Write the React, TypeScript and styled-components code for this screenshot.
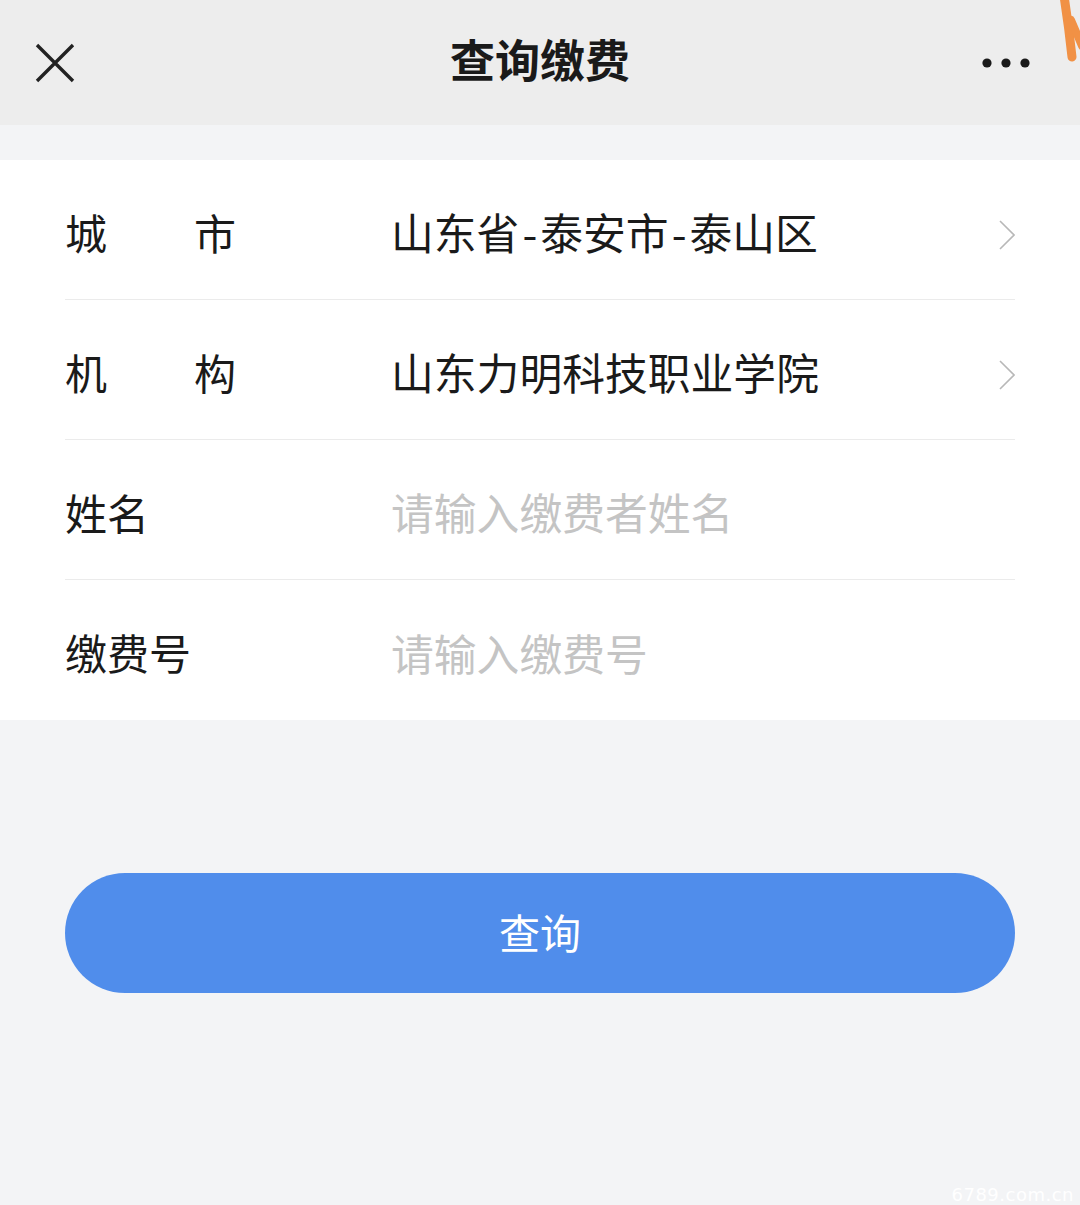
import styled, { createGlobalStyle } from 'styled-components';

const GlobalStyle = createGlobalStyle`
    html, body {
        margin: 0;
        padding: 0;
        background: #f3f4f6;
    }
    body {
        font-family: "Noto Sans CJK SC", "Noto Sans", sans-serif;
        color: #1a1a1a;
    }
`;

const Page = styled.div`
    position: relative;
    width: 1080px;
    min-height: 1205px;
    background: #f3f4f6;
    overflow: hidden;
`;

const NavBar = styled.header`
    height: 125px;
    background: #ededed;
    display: flex;
    align-items: center;
    justify-content: space-between;
    padding: 0 50px 0 34px;
    box-sizing: border-box;
`;

const NavTitle = styled.h1`
    margin: 0;
    font-size: 45px;
    font-weight: 700;
    color: #1a1a1a;
    position: absolute;
    left: 0;
    right: 0;
    top: 29px;
    text-align: center;
    line-height: 60px;
    pointer-events: none;
`;

const IconButton = styled.button`
    background: none;
    border: 0;
    padding: 0;
    display: flex;
    align-items: center;
    justify-content: center;
    cursor: pointer;
`;

const Stroke = styled.div`
    position: absolute;
    top: 0;
    right: 0;
    line-height: 0;
`;

const FormPanel = styled.section`
    margin-top: 35px;
    background: #fff;
    padding: 0 65px;
`;

const FormRow = styled.div<{ $last?: boolean }>`
    height: 140px;
    display: flex;
    align-items: center;
    border-bottom: ${({ $last }) => ($last ? 'none' : '1.5px solid #ebebeb')};
    box-sizing: border-box;
`;

const Label = styled.div<{ $spread?: boolean }>`
    width: 326px;
    font-size: 42px;
    line-height: 1;
    padding-top: 4px;
    display: flex;
    justify-content: ${({ $spread }) => ($spread ? 'space-between' : 'flex-start')};
    max-width: ${({ $spread }) => ($spread ? '171px' : 'none')};
    margin-right: ${({ $spread }) => ($spread ? '155px' : '0')};
`;

const Value = styled.div<{ $placeholder?: boolean }>`
    flex: 1;
    font-size: 42.8px;
    line-height: 1;
    padding-top: 4px;
    color: ${({ $placeholder }) => ($placeholder ? '#c4c4c4' : '#1a1a1a')};
    white-space: nowrap;
`;

const Dash = styled.span`
    display: inline-block;
    margin: 0 3px;
`;

const Chevron = styled.div`
    width: 16px;
    display: flex;
    align-items: center;
    padding-top: 10px;
`;

const ButtonWrap = styled.div`
    padding: 153px 65px 0;
`;

const QueryButton = styled.button`
    width: 100%;
    height: 120px;
    border: 0;
    border-radius: 60px;
    background: #508deb;
    color: #fff;
    font-family: "Noto Sans CJK SC", sans-serif;
    font-size: 41px;
    line-height: 1;
    padding-bottom: 4px;
    cursor: pointer;
`;

const Watermark = styled.div`
    position: absolute;
    right: 6px;
    bottom: 0;
    font-family: "DejaVu Sans", sans-serif;
    font-size: 18px;
    color: #ffffff;
    letter-spacing: 0.5px;
`;

const rows = [
    { label: ['城', '市'], value: '山东省-泰安市-泰山区', arrow: true },
    { label: ['机', '构'], value: '山东力明科技职业学院', arrow: true },
    { label: ['姓名'], value: '请输入缴费者姓名', placeholder: true },
    { label: ['缴费号'], value: '请输入缴费号', placeholder: true },
];

const renderValue = (text: string) =>
    text.split('-').map((part, i) => (
        <span key={i}>
            {i > 0 && <Dash>-</Dash>}
            {part}
        </span>
    ));

const App = () => {
    return (
        <Page>
            <GlobalStyle />
            <NavBar>
                <IconButton aria-label="close">
                    <svg width="42" height="42" viewBox="0 0 42 42">
                        <path d="M3 3 L39 39 M39 3 L3 39" stroke="#222" strokeWidth="3.4" fill="none" />
                    </svg>
                </IconButton>
                <IconButton aria-label="more">
                    <svg width="48" height="12" viewBox="0 0 48 12">
                        <circle cx="5" cy="6" r="4.6" fill="#1a1a1a" />
                        <circle cx="24" cy="6" r="4.6" fill="#1a1a1a" />
                        <circle cx="43" cy="6" r="4.6" fill="#1a1a1a" />
                    </svg>
                </IconButton>
            </NavBar>
            <NavTitle>查询缴费</NavTitle>
            {/* 우측 상단 주황색 손그림 */}
            <Stroke>
                <svg width="50" height="70" viewBox="0 0 50 70">
                    <path d="M34 -4 Q 39 28 42 57" stroke="#f19145" strokeWidth="9" fill="none" strokeLinecap="round" />
                    <path d="M41 20 L 52 46" stroke="#f19145" strokeWidth="8" fill="none" strokeLinecap="round" />
                </svg>
            </Stroke>

            <FormPanel>
                {rows.map((row, i) => (
                    <FormRow key={row.value} $last={i === rows.length - 1}>
                        <Label $spread={row.label.length > 1}>
                            {row.label.map((c) => (
                                <span key={c}>{c}</span>
                            ))}
                        </Label>
                        <Value $placeholder={row.placeholder}>{renderValue(row.value)}</Value>
                        {row.arrow && (
                            <Chevron>
                                <svg width="16" height="30" viewBox="0 0 16 30">
                                    <path d="M1 1 L15 15 L1 29" stroke="#b8b8b8" strokeWidth="1.6" fill="none" />
                                </svg>
                            </Chevron>
                        )}
                    </FormRow>
                ))}
            </FormPanel>

            <ButtonWrap>
                <QueryButton>查询</QueryButton>
            </ButtonWrap>

            <Watermark>6789.com.cn</Watermark>
        </Page>
    );
};

export default App;
